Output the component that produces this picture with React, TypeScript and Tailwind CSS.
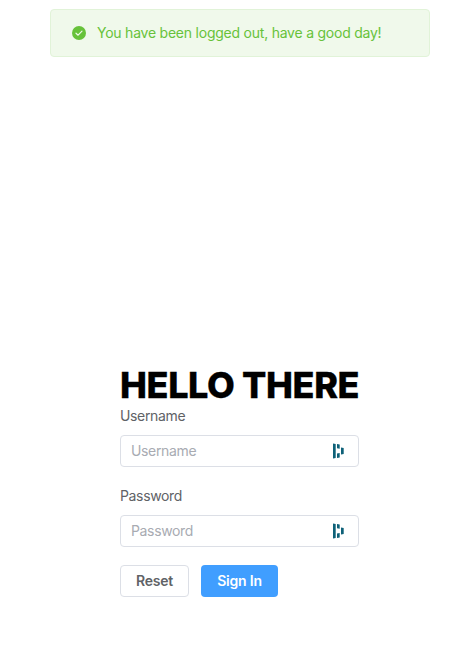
import React from "react";

function SuccessIcon() {
  return (
    <svg viewBox="0 0 14 14" className="h-3.5 w-3.5 shrink-0" aria-hidden="true">
      <circle cx="7" cy="7" r="7" fill="#67c23a" />
      <path d="M4 7.2 6.1 9.2 10 5.2" fill="none" stroke="#f0f9eb" strokeWidth="1.2" strokeLinecap="round" strokeLinejoin="round" />
    </svg>
  );
}

function PasswordManagerIcon() {
  return (
    <svg viewBox="0 0 12 16" className="h-4 w-3 shrink-0" fill="#0e6178" aria-hidden="true">
      <path d="M1 .4 3.7 1V15L1 15.6ZM5 1 7.7 1.6V5.8L5 5.2ZM5 10.6 7.7 10V14.4L5 15ZM9 4.4 11.7 5V11L9 11.6Z" />
    </svg>
  );
}

function Field({ label, type }: { label: string; type: string }) {
  return (
    <label className="block">
      <span className="block h-4 text-[14px] leading-4 tracking-[-0.35px] text-[#606266]">{label}</span>
      <span className="mt-[11px] flex h-8 items-center rounded-[4px] border border-[#dcdfe6] bg-white pl-[10px] pr-[14px]">
        <input
          type={type}
          placeholder={label}
          className="h-5 min-w-0 flex-1 bg-transparent text-[14px] leading-5 tracking-[-0.35px] outline-none placeholder:text-[#a8abb2]"
        />
        <PasswordManagerIcon />
      </span>
    </label>
  );
}

export default function App() {
  return (
    <div className="h-[652px] w-[472px] overflow-hidden bg-white pt-[9px] font-['Inter',sans-serif]">
      <div role="alert" className="ml-[50px] flex h-12 w-[380px] items-center gap-[11px] rounded-[4px] border border-[#e1f3d8] bg-[#f0f9eb] pl-[21px] text-[#67c23a]">
        <SuccessIcon />
        <p className="whitespace-nowrap text-[14px] leading-5 tracking-[-0.23px]">You have been logged out, have a good day!</p>
      </div>
      <form className="ml-[120px] mt-[308px] w-[239px]" onSubmit={(event) => event.preventDefault()}>
        <h1 className="h-[43px] whitespace-nowrap text-[36px] font-extrabold leading-[41px] tracking-[-0.38px] text-black [-webkit-text-stroke:0.3px_black]">HELLO THERE</h1>
        <div className="flex flex-col gap-[21px]">
          <Field label="Username" type="text" />
          <Field label="Password" type="password" />
        </div>
        <div className="mt-[18px] flex gap-3 text-[14px] font-semibold tracking-[-0.2px]">
          <button type="reset" className="h-8 w-[69px] rounded-[4px] border border-[#dcdfe6] bg-white pb-0.5 text-[#606266]">Reset</button>
          <button type="submit" className="h-8 w-[77px] rounded-[4px] bg-[#409eff] pb-0.5 text-white">Sign In</button>
        </div>
      </form>
    </div>
  );
}
